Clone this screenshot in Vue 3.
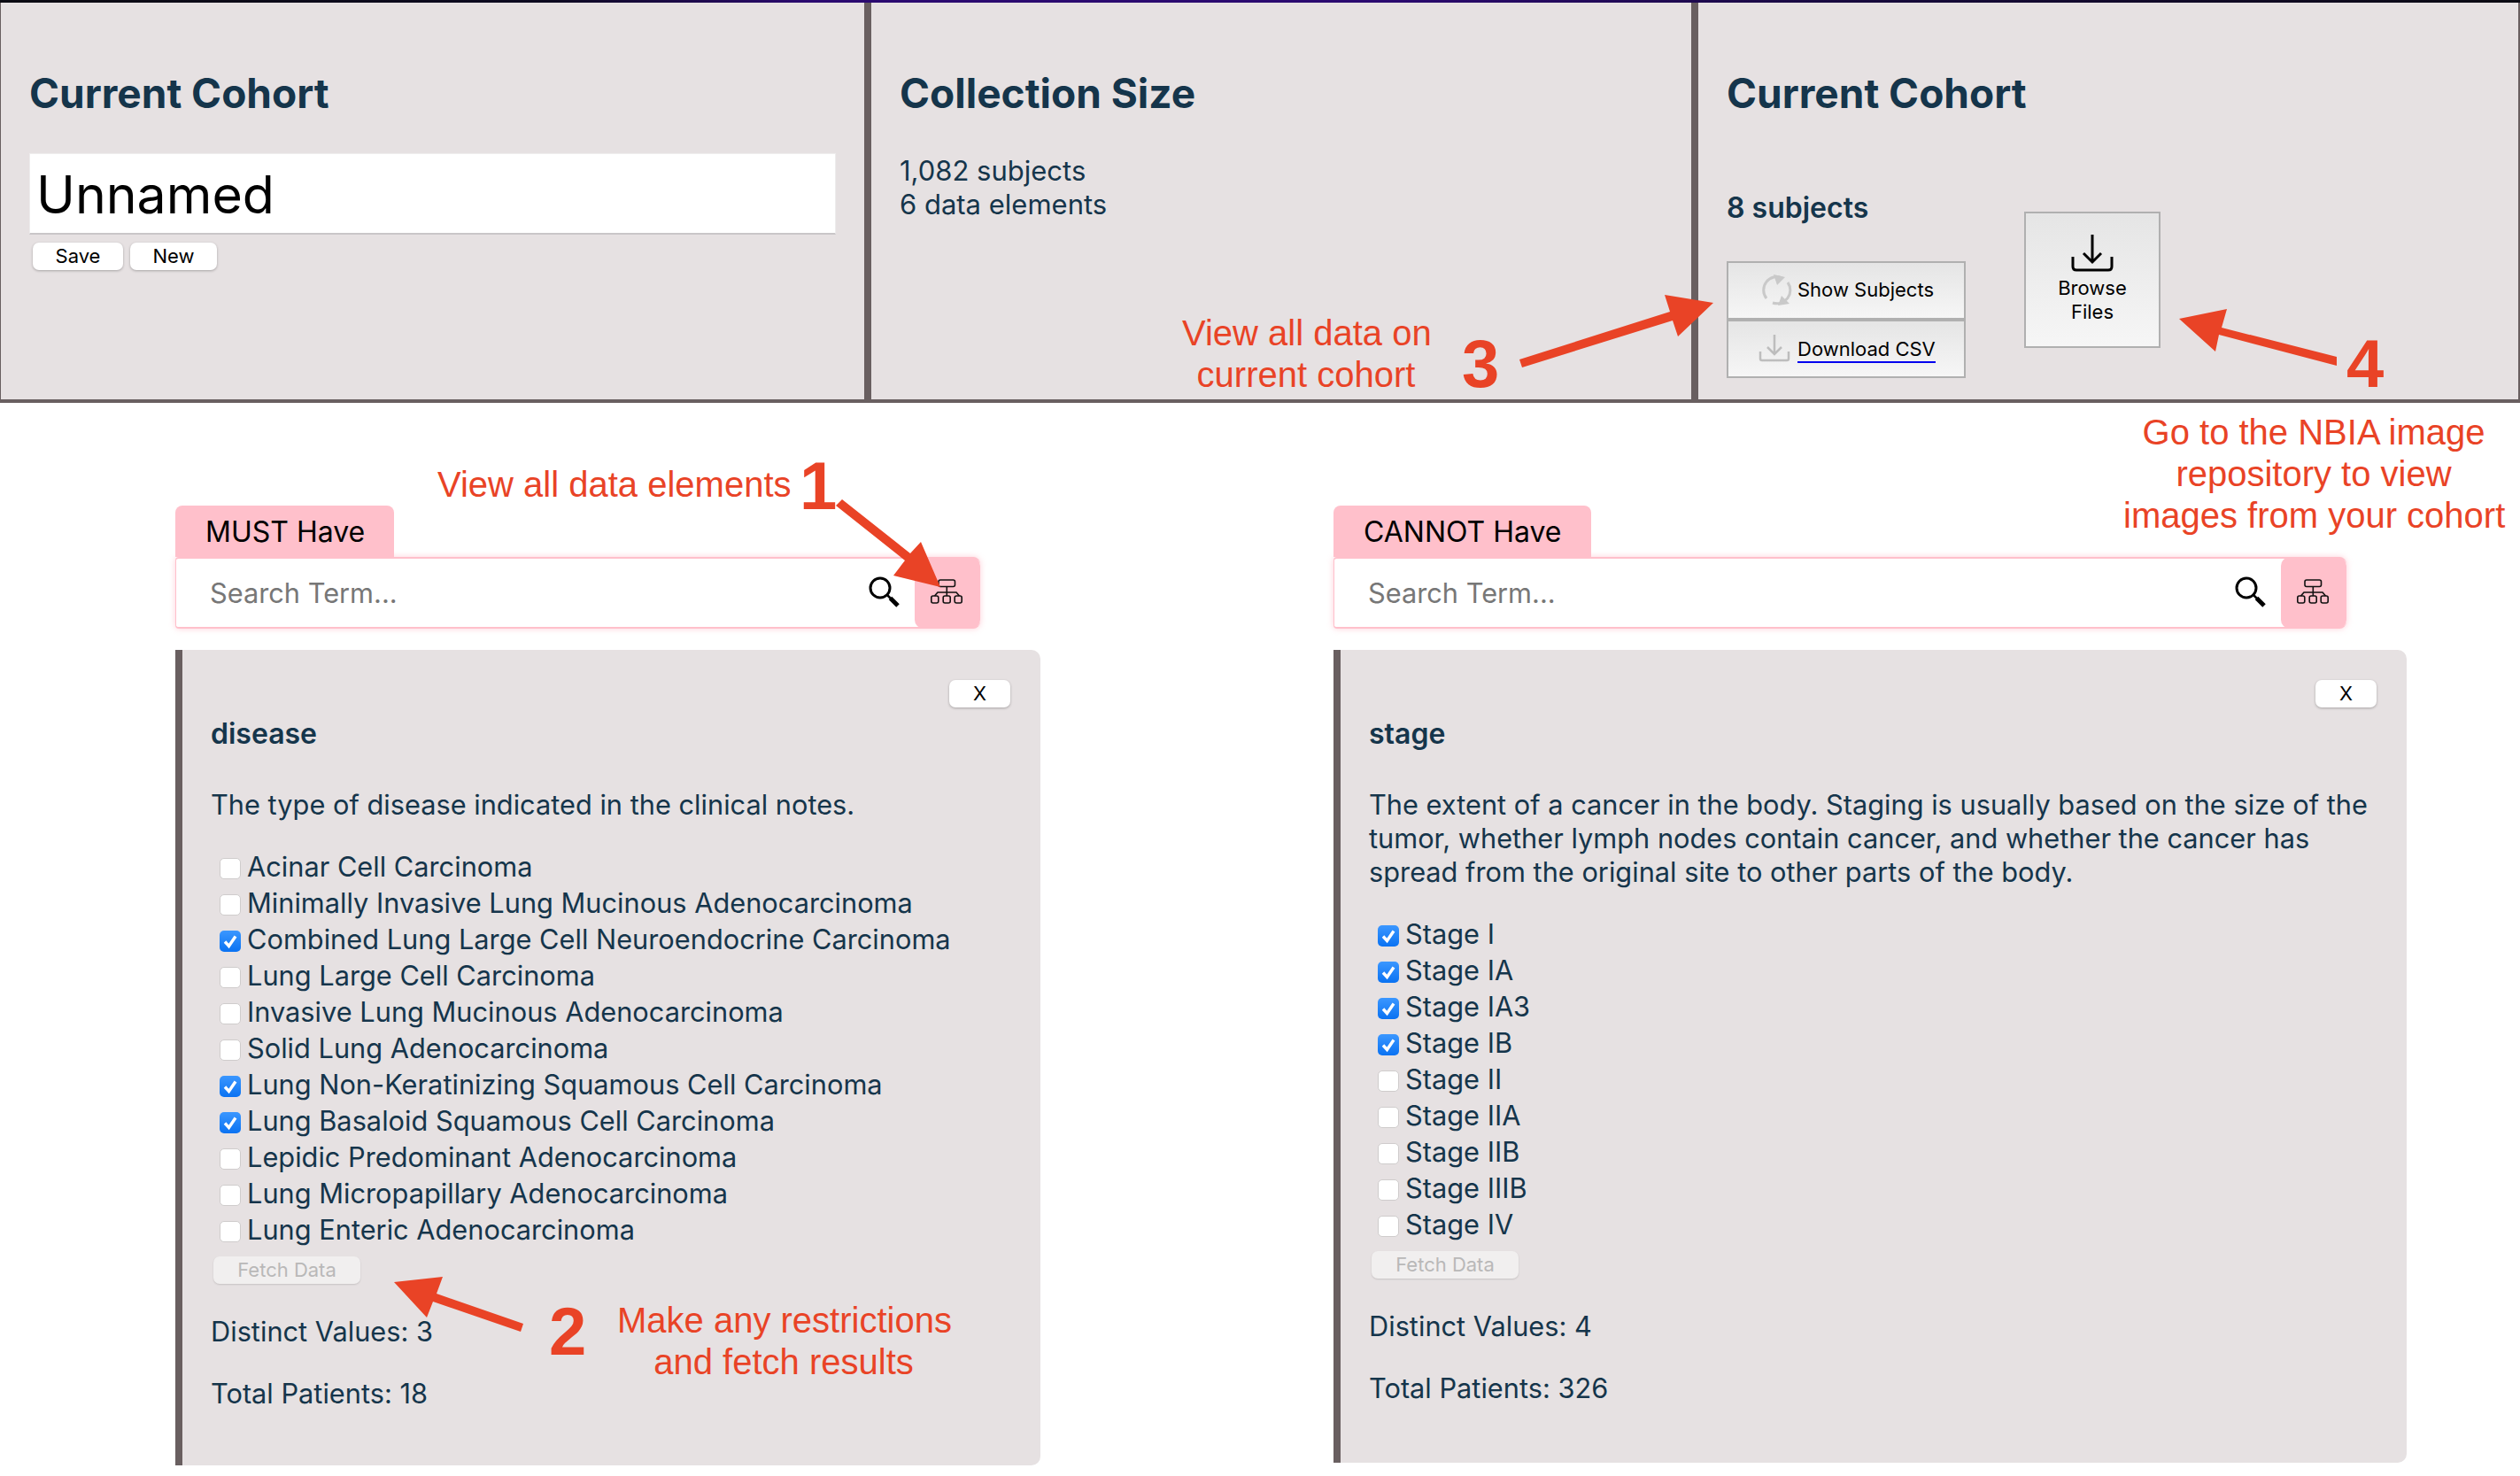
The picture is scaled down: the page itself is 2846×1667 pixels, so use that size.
<script setup>
const diseases = [
  ['Acinar Cell Carcinoma', false],
  ['Minimally Invasive Lung Mucinous Adenocarcinoma', false],
  ['Combined Lung Large Cell Neuroendocrine Carcinoma', true],
  ['Lung Large Cell Carcinoma', false],
  ['Invasive Lung Mucinous Adenocarcinoma', false],
  ['Solid Lung Adenocarcinoma', false],
  ['Lung Non-Keratinizing Squamous Cell Carcinoma', true],
  ['Lung Basaloid Squamous Cell Carcinoma', true],
  ['Lepidic Predominant Adenocarcinoma', false],
  ['Lung Micropapillary Adenocarcinoma', false],
  ['Lung Enteric Adenocarcinoma', false],
]
const stages = [
  ['Stage I', true],
  ['Stage IA', true],
  ['Stage IA3', true],
  ['Stage IB', true],
  ['Stage II', false],
  ['Stage IIA', false],
  ['Stage IIB', false],
  ['Stage IIIB', false],
  ['Stage IV', false],
]
const columns = [
  {
    tab: 'MUST Have',
    cls: 'col-left',
    title: 'disease',
    desc: ['The type of disease indicated in the clinical notes.'],
    items: diseases,
    distinct: 3,
    total: 18,
  },
  {
    tab: 'CANNOT Have',
    cls: 'col-right',
    title: 'stage',
    desc: [
      'The extent of a cancer in the body. Staging is usually based on the size of the',
      'tumor, whether lymph nodes contain cancer, and whether the cancer has',
      'spread from the original site to other parts of the body.',
    ],
    items: stages,
    distinct: 4,
    total: 326,
  },
]
</script>

<template>
  <div class="page">
    <div class="topline"></div>
    <section class="cards">
      <div class="card card-a">
        <h2>Current Cohort</h2>
        <div class="name-input">Unnamed</div>
        <div class="name-actions">
          <button class="chip save">Save</button>
          <button class="chip new">New</button>
        </div>
      </div>
      <div class="card card-b">
        <h2>Collection Size</h2>
        <p class="stats">1,082 subjects<br />6 data elements</p>
      </div>
      <div class="card card-c">
        <h2>Current Cohort</h2>
        <div class="cohort-row">
          <div class="cohort-left">
            <div class="subjects">8 subjects</div>
            <div class="stack">
              <button class="grad wide">
                <svg class="ic-refresh" viewBox="0 0 36 36" width="36" height="36" fill="none" stroke="#c9c9c9" stroke-width="3">
                  <path d="M6 27 A15 15 0 0 1 24 4" />
                  <path d="M30 9 A15 15 0 0 1 13 32" />
                  <path d="M14 0 L27 3 L18 12 Z" fill="#c9c9c9" stroke="none" />
                  <path d="M23 24 L32 33 L19 35 Z" fill="#c9c9c9" stroke="none" />
                </svg>
                <span class="btn-label">Show Subjects</span>
              </button>
              <button class="grad wide">
                <svg class="ic-dl" viewBox="0 0 36 32" width="36" height="32" fill="none" stroke="#bdbdbd" stroke-width="2.5">
                  <path d="M18 1 V22 M10 15 L18 23 L26 15" />
                  <path d="M2 20 V28 Q2 30 4 30 H32 Q34 30 34 28 V20" />
                </svg>
                <span class="csv">Download CSV</span>
              </button>
            </div>
          </div>
          <button class="grad browse">
            <svg viewBox="0 0 48 42" width="48" height="42" fill="none" stroke="#000" stroke-width="3">
              <path d="M24 0 V30 M14 21 L24 31 L34 21" />
              <path d="M2 25 V36 Q2 40 6 40 H42 Q46 40 46 36 V25" />
            </svg>
            <span>Browse<br />Files</span>
          </button>
        </div>
      </div>
    </section>

    <section class="builder">
      <div v-for="col in columns" :key="col.title" class="col" :class="col.cls">
        <div class="tab">{{ col.tab }}</div>
        <div class="search">
          <span class="placeholder">Search Term...</span>
          <svg class="ic-search" viewBox="0 0 36 36" width="36" height="36" fill="none" stroke="#000">
            <circle cx="13" cy="13" r="11" stroke-width="3" />
            <path d="M21 21 L25 25" stroke-width="2.5" />
            <path d="M24.5 24.5 L33 33" stroke-width="5" />
          </svg>
          <div class="tree-btn">
            <svg viewBox="0 0 36 28" width="36" height="28" fill="none" stroke="#111" stroke-width="1.6">
              <rect x="9" y="1" width="18.5" height="7.5" rx="2" />
              <path d="M18.3 8.5 V19 M4.5 19 L8 15 H29 L32.5 19" />
              <rect x="0.8" y="19" width="8" height="8" rx="2" />
              <rect x="14.2" y="19" width="8" height="8" rx="2" />
              <rect x="27.2" y="19" width="8" height="8" rx="2" />
            </svg>
          </div>
        </div>
        <div class="panel">
          <div class="panel-head"><button class="chip close">X</button></div>
          <h3>{{ col.title }}</h3>
          <p class="desc"><template v-for="line in col.desc" :key="line">{{ line }}<br /></template></p>
          <ul class="options">
            <li v-for="[label, on] in col.items" :key="label">
              <span class="box" :class="{ on }">
                <svg v-if="on" viewBox="0 0 24 24" width="24" height="24" fill="none" stroke="#fff" stroke-width="3.4">
                  <path d="M6 12.5 L10.5 17.5 L18 6.5" />
                </svg>
              </span>
              <span>{{ label }}</span>
            </li>
          </ul>
          <button class="chip fetch">Fetch Data</button>
          <p class="metric first">Distinct Values: {{ col.distinct }}</p>
          <p class="metric">Total Patients: {{ col.total }}</p>
        </div>
      </div>
    </section>

    <svg class="arrows" width="2846" height="1667" viewBox="0 0 2846 1667" fill="#e94326">
      <polygon points="951,564 1028,625 1040,612 1062,663 1009,650 1022,633 944,571" />
      <polygon points="591,1495 493,1461 500,1442 445,1448 482,1488 489,1470 588,1504" />
      <polygon points="1716,406 1886,352 1880,333 1935,342 1895,380 1889,362 1719,415" />
      <polygon points="2639,403 2509,370 2515,349 2461,360 2502,397 2506,378 2639,413" />
    </svg>
    <div class="note n-1a">View all data elements</div>
    <div class="num d-1">1</div>
    <div class="note n-2">Make any restrictions<br />and fetch results</div>
    <div class="num d-2">2</div>
    <div class="note n-3">View all data on<br />current cohort</div>
    <div class="num d-3">3</div>
    <div class="note n-4">Go to the NBIA image<br />repository to view<br />images from your cohort</div>
    <div class="num d-4">4</div>
  </div>
</template>

<style>
html, body { margin: 0; padding: 0; background: #fff; }
</style>

<style scoped>
.page {
  position: relative;
  width: 2846px;
  height: 1667px;
  overflow: hidden;
  background: #fff;
  font-family: Inter, "Liberation Sans", sans-serif;
  color: #15354b;
}
.topline {
  height: 3px;
  background: linear-gradient(90deg, #0b0b12 0%, #0d0a20 22%, #2b0a70 32%, #2b0a70 55%, #16093a 75%, #0b0b12 100%);
}
.cards {
  display: flex;
  height: 452px;
}
.card {
  box-sizing: border-box;
  background: #e6e1e2;
  border-bottom: 4px solid #695f60;
  border-right: 8px solid #695f60;
}
.card h2 {
  margin: 0;
  font-size: 46px;
  line-height: 58px;
  font-weight: 700;
  color: #15354b;
}
.card-a { width: 984px; padding: 73px 32px 0; border-left: 1px solid #695f60; }
.card-b { width: 934px; padding: 73px 32px 0; }
.card-c { flex: 1; padding: 73px 32px 0; border-right-width: 2px; }
.name-input {
  box-sizing: border-box;
  width: 911px;
  height: 92px;
  margin-top: 39px;
  padding-left: 7px;
  background: #fff;
  border: 1px solid #eeeded;
  border-bottom: 2px solid #c9c6c8;
  color: #000;
  font-size: 59px;
  line-height: 92px;
}
.name-actions { display: flex; gap: 8px; margin: 9px 0 0 4px; }
.chip {
  box-sizing: border-box;
  height: 31px;
  padding: 0;
  border: 0;
  border-radius: 7px;
  background: #fff;
  box-shadow: 0 1px 3px rgba(0, 0, 0, 0.28);
  color: #000;
  font-family: inherit;
  font-size: 22px;
  line-height: 29px;
}
.save { width: 102px; }
.new { width: 98px; }
.stats {
  margin: 40px 0 0;
  font-size: 31px;
  line-height: 38px;
}
.cohort-row { display: flex; gap: 66px; }
.cohort-left { width: 270px; }
.subjects {
  margin-top: 82px;
  font-size: 32px;
  line-height: 38px;
  font-weight: 600;
}
.stack { margin-top: 41px; }
.grad {
  box-sizing: border-box;
  display: flex;
  align-items: center;
  border: 2px solid #b0b0b0;
  border-radius: 0;
  padding: 0;
  background: linear-gradient(180deg, #e5e5e5 0%, #f6f6f6 100%);
  color: #000;
  font-family: inherit;
  font-size: 22px;
}
.wide { width: 270px; height: 66px; padding-left: 37px; gap: 5px; }
.btn-label { margin-top: -2px; }
.wide .ic-dl { margin: -3px 3px 0 -3px; }
.csv { color: #000; border-bottom: 2px solid #0000ee; line-height: 27px; margin-top: 3px; }
.browse {
  flex-direction: column;
  width: 154px;
  height: 154px;
  margin-top: 105px;
  padding-top: 24px;
  line-height: 27px;
  gap: 5px;
  text-align: center;
}
.builder {
  display: flex;
  gap: 331px;
  padding: 116px 0 0 198px;
}
.col-left { width: 977px; }
.col-right { width: 1212px; }
.tab {
  box-sizing: border-box;
  display: inline-block;
  height: 58px;
  padding: 0 33px 0 34px;
  background: #ffc0cb;
  border-radius: 8px 8px 0 0;
  color: #000;
  font-size: 32px;
  line-height: 60px;
  vertical-align: top;
}
.search {
  box-sizing: border-box;
  display: flex;
  align-items: center;
  width: calc(100% - 68px);
  height: 81px;
  background: #fff;
  border: 2px solid #ffc0cb;
  border-left-width: 1px;
  border-right-width: 0;
  border-radius: 4px 8px 8px 4px;
  box-shadow: 0 0 7px rgba(255, 192, 203, 0.75);
}
.placeholder {
  flex: 1;
  padding-left: 38px;
  color: #777;
  font-size: 30.75px;
}
.ic-search { margin: -2px 16px 0 0; }
.tree-btn {
  display: flex;
  align-items: center;
  justify-content: center;
  box-sizing: border-box;
  width: 74px;
  height: 81px;
  margin: -2px 0;
  padding: 0 2px 3px 0;
  background: #ffc0cb;
  border-radius: 10px;
}
.panel {
  box-sizing: border-box;
  margin-top: 24px;
  padding: 34px 34px 62px 32px;
  background: #e6e1e2;
  border-left: 8px solid #695f60;
  border-radius: 0 10px 10px 0;
  font-size: 30.75px;
  line-height: 38px;
}
.col-right .panel { padding-bottom: 65px; }
.panel-head { display: flex; justify-content: flex-end; height: 31px; }
.close { width: 69px; }
.panel h3 {
  margin: 10px 0 0;
  font-size: 32px;
  line-height: 40px;
  font-weight: 600;
}
.desc { margin: 41px 0 0; white-space: nowrap; }
.options { list-style: none; margin: 30px 0 0 10px; padding: 0; }
.options li { display: flex; align-items: center; gap: 7px; height: 41px; line-height: 38px; }
.box {
  box-sizing: border-box;
  flex: none;
  width: 24px;
  height: 24px;
  margin-top: 4px;
  background: #fff;
  border: 1px solid #cfcccc;
  border-radius: 5px;
}
.box svg { display: block; margin: 0; }
.box.on {
  border: 0;
  background: linear-gradient(180deg, #3b97ff, #0a72f2);
}
.fetch {
  display: block;
  width: 166px;
  margin: 10px 0 0 3px;
  background: #f1efef;
  color: #b9b8b8;
  box-shadow: 0 1px 2px rgba(0, 0, 0, 0.14);
}
.metric { margin: 32px 0 0; }
.metric.first { margin-top: 35px; }
.arrows { position: absolute; left: 0; top: 0; pointer-events: none; }
.note {
  position: absolute;
  color: #e94326;
  font-family: "Liberation Sans", Arial, sans-serif;
  font-size: 40px;
  line-height: 47px;
  text-align: center;
  white-space: nowrap;
}
.num {
  position: absolute;
  color: #e94326;
  font-family: "Liberation Sans", Arial, sans-serif;
  font-size: 76px;
  font-weight: 700;
  line-height: 76px;
}
.n-1a { left: 494px; top: 524px; }
.n-2 { left: 697px; top: 1468px; width: 376px; }
.n-3 { left: 1335px; top: 353px; width: 280px; }
.n-4 { left: 2398px; top: 465px; width: 430px; }
.d-1 { left: 903px; top: 511px; }
.d-2 { left: 620px; top: 1466px; }
.d-3 { left: 1651px; top: 373px; }
.d-4 { left: 2650px; top: 373px; }
</style>
